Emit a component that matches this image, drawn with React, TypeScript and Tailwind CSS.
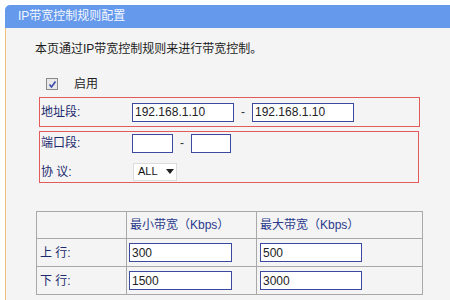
import React from "react";

const font = { fontFamily: '"Liberation Sans", "Noto Sans CJK SC", sans-serif' };

const inputCls =
  "h-[19px] border border-[#3b4a9e] bg-white px-[2px] text-[12px] leading-[17px] text-[#222] outline-none";

export default function App() {
  return (
    <div className="w-[450px] h-[300px] overflow-hidden bg-white pt-[5px] pl-[5px]" style={font}>
      <div className="flex flex-col">
        <div className="h-[23px] rounded-tl-[5px] bg-[#6599ec] pl-[13px] text-[12px] leading-[23px] text-[#f4f7ff]">
          IP带宽控制规则配置
        </div>
        <div className="h-[272px] border-l border-[#efc07c] bg-[#f4f4f4] pl-[29px]">
          <p className="mt-[14px] text-[12px] leading-[14px] text-[#1e1e1e]">
            本页通过IP带宽控制规则来进行带宽控制。
          </p>

          <div className="mt-[21px] ml-[11px] flex h-[14px] items-center gap-[16px]">
            <span className="flex h-[12px] w-[12px] items-center justify-center border border-[#8a8a8a] bg-[#e8e8e8]">
              <svg width="9" height="9" viewBox="0 0 9 9">
                <path d="M1.5 4.5 L3.5 7 L7.5 1.5" fill="none" stroke="#3a4aa8" strokeWidth="1.6" />
              </svg>
            </span>
            <span className="text-[12px] text-[#1e1e1e]">启用</span>
          </div>

          <div className="mt-[6px] ml-[4px] flex h-[30px] w-[381px] items-center border border-[#e25b5b]">
            <span className="w-[92px] pl-[1px] text-[12px] text-[#1c2a6e]">地址段:</span>
            <input className={`${inputCls} w-[102px]`} defaultValue="192.168.1.10" />
            <span className="w-[18px] text-center text-[12px] text-[#333]">-</span>
            <input className={`${inputCls} w-[102px]`} defaultValue="192.168.1.10" />
          </div>

          <div className="mt-[4px] ml-[4px] flex h-[52px] w-[380px] flex-col justify-center gap-[10px] border border-[#e25b5b]">
            <div className="flex items-center">
              <span className="w-[92px] pl-[1px] text-[12px] text-[#1c2a6e]">端口段:</span>
              <input className={`${inputCls} h-[18px] w-[41px]`} />
              <span className="w-[18px] text-center text-[12px] text-[#333]">-</span>
              <input className={`${inputCls} h-[18px] w-[40px]`} />
            </div>
            <div className="flex items-center">
              <span className="w-[93px] pl-[1px] text-[12px] text-[#1c2a6e]">协 议:</span>
              <span className="flex h-[18px] w-[44px] items-center gap-[8px] border border-[#dcdcdc] bg-white pl-[4px] text-[11px] text-[#111]">
                ALL
                <svg width="8" height="5" viewBox="0 0 8 5">
                  <path d="M0 0 H8 L4 5 Z" fill="#222" />
                </svg>
              </span>
            </div>
          </div>

          <table className="mt-[28px] ml-[1px] border-collapse text-[12px]">
            <tbody>
              <tr className="h-[27px]">
                <td className="w-[90px] border border-[#a8a8a8]"></td>
                <td className="w-[130px] border border-[#a8a8a8] pl-[3px] text-[#2a3a8c]">最小带宽（Kbps）</td>
                <td className="w-[166px] border border-[#a8a8a8] pl-[3px] text-[#2a3a8c]">最大带宽（Kbps）</td>
              </tr>
              <tr className="h-[28px]">
                <td className="border border-[#a8a8a8] pl-[3px] text-[#1c2a6e]">上 行:</td>
                <td className="border border-[#a8a8a8] pl-[2px]">
                  <input className={`${inputCls} w-[103px]`} defaultValue="300" />
                </td>
                <td className="border border-[#a8a8a8] pl-[3px]">
                  <input className={`${inputCls} w-[102px]`} defaultValue="500" />
                </td>
              </tr>
              <tr className="h-[28px]">
                <td className="border border-[#a8a8a8] pl-[3px] text-[#1c2a6e]">下 行:</td>
                <td className="border border-[#a8a8a8] pl-[2px]">
                  <input className={`${inputCls} w-[103px]`} defaultValue="1500" />
                </td>
                <td className="border border-[#a8a8a8] pl-[3px]">
                  <input className={`${inputCls} w-[102px]`} defaultValue="3000" />
                </td>
              </tr>
            </tbody>
          </table>
        </div>
      </div>
    </div>
  );
}
